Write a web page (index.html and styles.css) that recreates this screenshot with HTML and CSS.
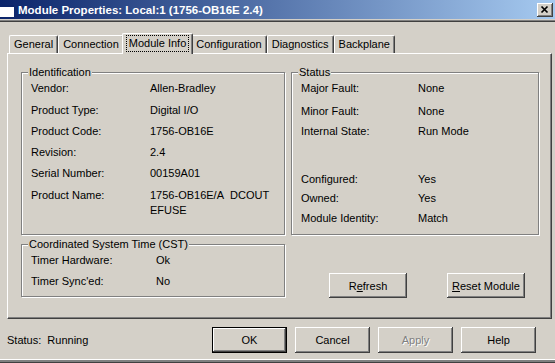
FILE: index.html
```html
<!DOCTYPE html>
<html lang="en">
<head>
    <meta charset="UTF-8">
    <title>Module Properties: Local:1 (1756-OB16E 2.4)</title>
    <link rel="stylesheet" href="styles.css">
</head>
<body>
    <div class="window">
        <div class="titlebar">
            <svg class="app-icon" viewBox="0 0 14 12" width="14" height="12">
                <rect x="0" y="0" width="14" height="12" fill="#fff"/>
                <rect x="0" y="0" width="14" height="2" fill="#0a246a"/>
            </svg>
            <span class="title">Module Properties: Local:1 (1756-OB16E 2.4)</span>
            <div class="close-btn">
                <svg viewBox="0 0 16 14" width="16" height="14">
                    <path d="M4.5 3.5 L10.5 9.5 M10.5 3.5 L4.5 9.5" stroke="#000" stroke-width="1.7" fill="none"/>
                </svg>
            </div>
        </div>
        <div class="frame-rule"></div>

        <div class="dialog">
            <div class="tabs">
                <div class="tab">General</div>
                <div class="tab">Connection</div>
                <div class="tab active"><span class="focus">Module Info</span></div>
                <div class="tab">Configuration</div>
                <div class="tab">Diagnostics</div>
                <div class="tab">Backplane</div>
            </div>

            <div class="panel">
                <div class="group">
                    <div class="group-title">Identification</div>
                    <div class="fields ident-fields">
                        <span>Vendor:</span><span>Allen-Bradley</span>
                        <span>Product Type:</span><span>Digital I/O</span>
                        <span>Product Code:</span><span>1756-OB16E</span>
                        <span>Revision:</span><span>2.4</span>
                        <span>Serial Number:</span><span>00159A01</span>
                        <span>Product Name:</span><span>1756-OB16E/A&nbsp; DCOUT EFUSE</span>
                    </div>
                </div>

                <div class="group">
                    <div class="group-title">Status</div>
                    <div class="fields status-fields">
                        <span>Major Fault:</span><span>None</span>
                        <span>Minor Fault:</span><span>None</span>
                        <span>Internal State:</span><span>Run Mode</span>
                        <span>Configured:</span><span>Yes</span>
                        <span>Owned:</span><span>Yes</span>
                        <span>Module Identity:</span><span>Match</span>
                    </div>
                </div>

                <div class="group">
                    <div class="group-title">Coordinated System Time (CST)</div>
                    <div class="fields cst-fields">
                        <span>Timer Hardware:</span><span>Ok</span>
                        <span>Timer Sync'ed:</span><span>No</span>
                    </div>
                </div>

                <div class="actions">
                    <button class="btn btn-wide">R<u>e</u>fresh</button>
                    <button class="btn btn-wide"><u>R</u>eset Module</button>
                </div>
            </div>

            <div class="footer">
                <span class="status-text">Status:&nbsp; Running</span>
                <div class="buttons">
                    <button class="btn default">OK</button>
                    <button class="btn">Cancel</button>
                    <button class="btn" disabled>Apply</button>
                    <button class="btn">Help</button>
                </div>
            </div>
        </div>

        <div class="bottom-edge"></div>
    </div>
</body>
</html>
```

FILE: styles.css
```css
* {
    margin: 0;
    padding: 0;
    box-sizing: border-box;
}

body {
    width: 555px;
    height: 363px;
    overflow: hidden;
    background: #d4d0c8;
    font-family: "Liberation Sans", Arial, sans-serif;
    font-size: 11px;
    color: #000;
}

.window {
    height: 363px;
    display: flex;
    flex-direction: column;
}

/* title bar */
.titlebar {
    height: 19px;
    display: flex;
    align-items: center;
    padding-right: 2px;
    background: linear-gradient(90deg, #0a246a 0%, #a6caf0 100%);
}

.app-icon {
    margin: 2px 4px 0 0;
}

.title {
    flex: 1;
    color: #fff;
    font-weight: bold;
    font-size: 11.5px;
}

.close-btn {
    width: 16px;
    height: 14px;
    background: #d4d0c8;
    box-shadow: inset -1px -1px #404040, inset 1px 1px #fff, inset -2px -2px #808080;
}

.close-btn svg {
    display: block;
}

.frame-rule {
    margin-top: 1px;
    height: 2px;
    border-top: 1px solid #808080;
    border-bottom: 1px solid #404040;
}

.dialog {
    padding: 0 3px 0 7px;
}

/* tabs */
.tabs {
    display: flex;
    align-items: flex-end;
    height: 20px;
    margin-top: 11px;
    padding-left: 2px;
}

.tab {
    height: 18px;
    padding: 0 4px;
    line-height: 17px;
    border: 1px solid;
    border-color: #fff #404040 transparent #fff;
    border-bottom: none;
    border-radius: 2px 2px 0 0;
    box-shadow: inset -1px 0 #808080;
    white-space: nowrap;
}

.tab.active {
    position: relative;
    height: 21px;
    margin: 0 -2px -1px;
    padding: 1px 3px 0;
    line-height: 13px;
    background: #d4d0c8;
}

.focus {
    display: inline-block;
    padding: 1px 2px;
    border: 1px dotted #000;
}

/* tab page */
.panel {
    height: 266px;
    display: grid;
    grid-template-columns: 264px 248px;
    grid-template-rows: 163px 53px;
    gap: 9px 6px;
    padding: 18px 0 0 13px;
    border: 1px solid;
    border-color: #fff #404040 #404040 #fff;
    box-shadow: inset -1px -1px #808080;
}

.group {
    border: 1px solid #808080;
    box-shadow: 1px 1px #fff, inset 1px 1px #fff;
    padding: 0 9px;
}

.group-title {
    width: fit-content;
    margin: -7px 0 0 -3px;
    padding: 0 1px;
    line-height: 13px;
    background: #d4d0c8;
}

.fields {
    display: grid;
    line-height: 15px;
    padding-top: 2px;
}

.ident-fields {
    grid-template-columns: 119px 1fr;
    grid-template-rows: 22px 21px 21px 21px 22px auto;
}

.status-fields {
    grid-template-columns: 117px 1fr;
    grid-template-rows: 23px 20px 48px 19px 20px auto;
}

.cst-fields {
    grid-template-columns: 125px 1fr;
    grid-template-rows: 21px auto;
}

.actions {
    display: flex;
    justify-content: flex-end;
    align-items: flex-start;
    gap: 40px;
    padding: 29px 14px 0 0;
}

/* buttons */
.btn {
    width: 75px;
    height: 26px;
    border: none;
    background: #d4d0c8;
    font-family: inherit;
    font-size: 11px;
    color: #000;
    box-shadow: inset -1px -1px #404040, inset 1px 1px #fff, inset -2px -2px #808080;
}

.btn-wide {
    width: 78px;
    height: 25px;
}

.btn.default {
    box-shadow: inset 0 0 0 1px #000, inset -2px -2px #404040, inset 2px 2px #fff, inset -3px -3px #808080;
}

.btn:disabled {
    color: #808080;
    text-shadow: 1px 1px #fff;
}

.footer {
    display: flex;
    align-items: center;
    height: 26px;
    margin-top: 8px;
}

.status-text {
    flex: 1;
}

.buttons {
    display: flex;
    gap: 8px;
    margin-right: 16px;
}

.bottom-edge {
    margin-top: auto;
    height: 4px;
    border-top: 1px solid #fff;
    border-bottom: 1px solid #404040;
    background: #808080;
}
```
